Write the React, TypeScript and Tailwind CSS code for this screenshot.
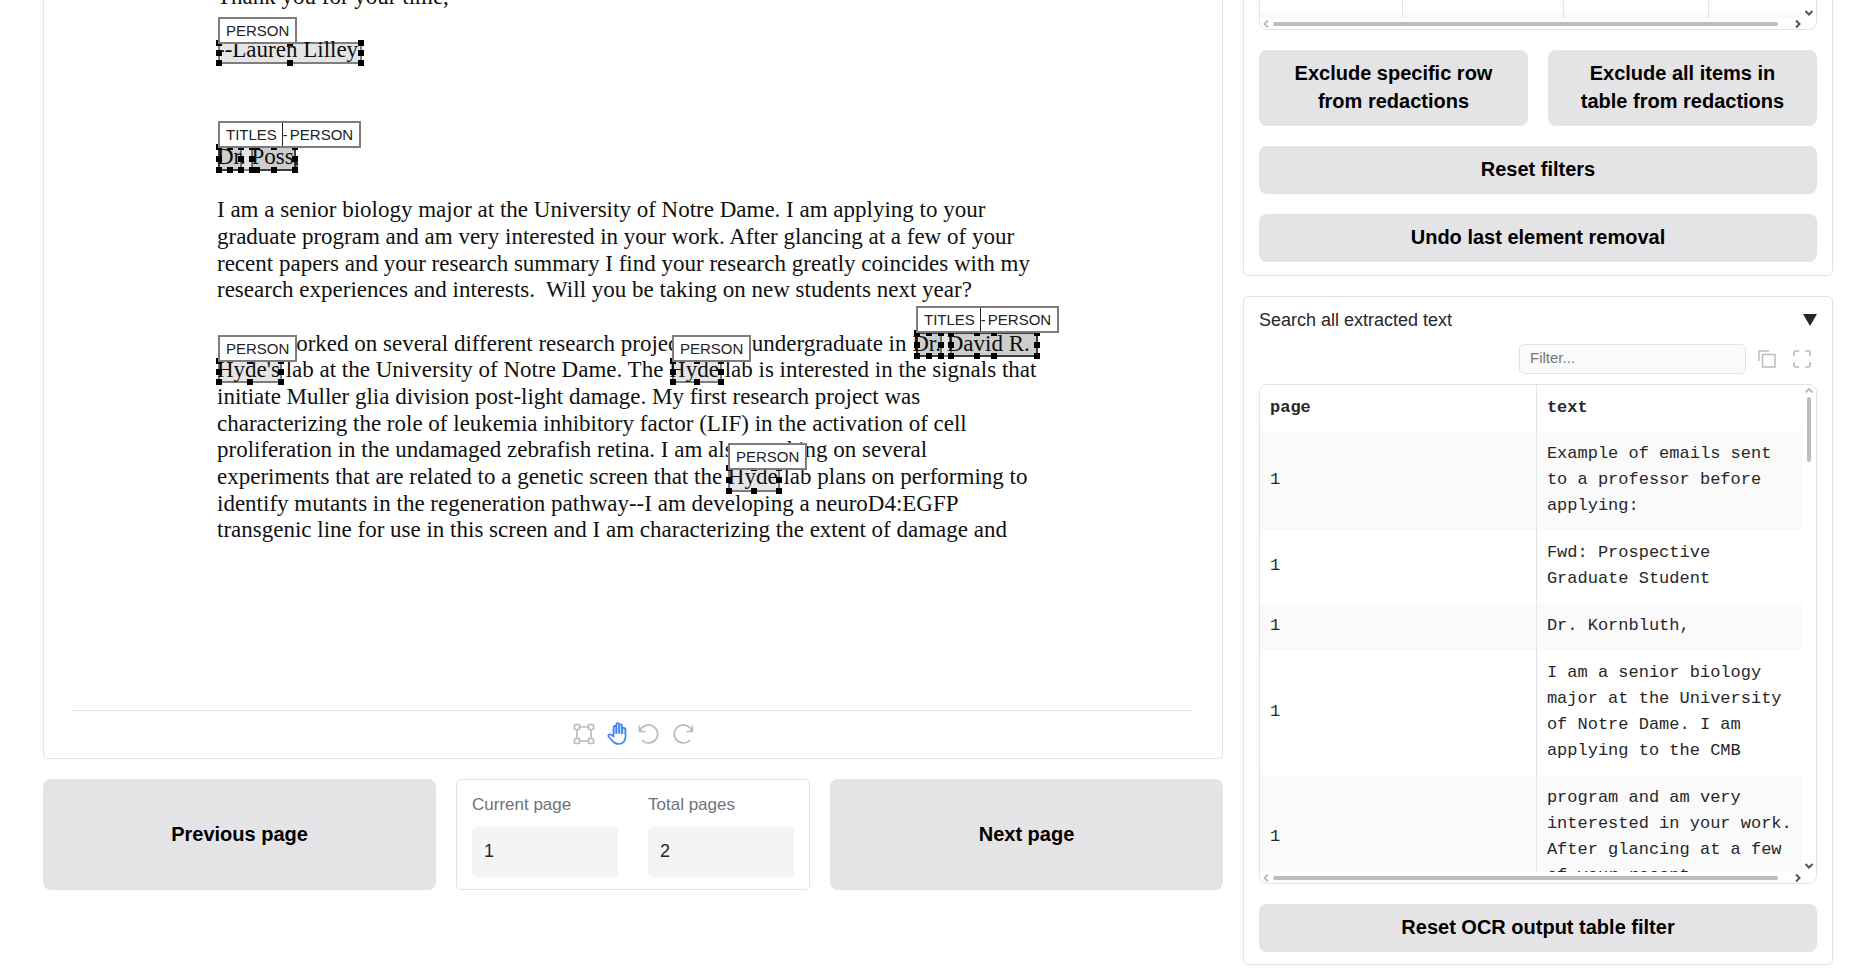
import type { ReactNode } from "react";

type Box = { left: number; top: number; width: number; height: number };

const LINES = [
  "Thank you for your time,",
  "",
  "--Lauren Lilley",
  "",
  "",
  "",
  "Dr. Poss,",
  "",
  "I am a senior biology major at the University of Notre Dame. I am applying to your",
  "graduate program and am very interested in your work. After glancing at a few of your",
  "recent papers and your research summary I find your research greatly coincides with my",
  "research experiences and interests.  Will you be taking on new students next year?",
  "",
  "I have worked on several different research projects as an undergraduate in Dr. David R.",
  "Hyde's lab at the University of Notre Dame. The Hyde lab is interested in the signals that",
  "initiate Muller glia division post-light damage. My first research project was",
  "characterizing the role of leukemia inhibitory factor (LIF) in the activation of cell",
  "proliferation in the undamaged zebrafish retina. I am also working on several",
  "experiments that are related to a genetic screen that the Hyde lab plans on performing to",
  "identify mutants in the regeneration pathway--I am developing a neuroD4:EGFP",
  "transgenic line for use in this screen and I am characterizing the extent of damage and",
];

const BOXES: Box[] = [
  { left: 219, top: 43, width: 142, height: 20 },
  { left: 219, top: 147, width: 22, height: 23 },
  { left: 219, top: 147, width: 76, height: 23 },
  { left: 252, top: 147, width: 43, height: 23 },
  { left: 917, top: 333, width: 24, height: 23 },
  { left: 917, top: 333, width: 120, height: 23 },
  { left: 951, top: 333, width: 86, height: 23 },
  { left: 219, top: 361, width: 62, height: 21 },
  { left: 673, top: 361, width: 48, height: 21 },
  { left: 729, top: 468, width: 50, height: 23 },
];

const LABELS = [
  { left: 218, top: 17, names: ["PERSON"] },
  { left: 218, top: 121, names: ["TITLES", "PERSON"] },
  { left: 916, top: 306, names: ["TITLES", "PERSON"] },
  { left: 218, top: 335, names: ["PERSON"] },
  { left: 672, top: 335, names: ["PERSON"] },
  { left: 728, top: 443, names: ["PERSON"] },
];

const ROWS = [
  ["Example of emails sent", "to a professor before", "applying:"],
  ["Fwd: Prospective", "Graduate Student"],
  ["Dr. Kornbluth,"],
  ["I am a senior biology", "major at the University", "of Notre Dame. I am", "applying to the CMB"],
  ["program and am very", "interested in your work.", "After glancing at a few", "of your recent"],
];

function Redaction({ box }: { box: Box }) {
  const handle = "absolute size-[6px] -translate-1/2 bg-black";
  return (
    <div className="absolute" style={box}>
      <div className="absolute -inset-px border-2 border-black/45 bg-black/10" />
      <i className={`${handle} left-0 top-0`} />
      <i className={`${handle} left-1/2 top-0`} />
      <i className={`${handle} left-full top-0`} />
      <i className={`${handle} left-0 top-1/2`} />
      <i className={`${handle} left-full top-1/2`} />
      <i className={`${handle} left-0 top-full`} />
      <i className={`${handle} left-1/2 top-full`} />
      <i className={`${handle} left-full top-full`} />
    </div>
  );
}

function Label({ left, top, names }: { left: number; top: number; names: string[] }) {
  return (
    <div
      className="absolute flex h-[27px] items-center border-2 border-[#7d7d7d] bg-white font-['Liberation_Sans',sans-serif] text-[15px] leading-[23px] text-[#222]"
      style={{ left, top }}
    >
      {names.map((name, i) => (
        <span
          key={name}
          className={
            i < names.length - 1
              ? "border-r border-[#222] pl-[6px] pr-[5px]"
              : names.length > 1
                ? "pr-[6px]"
                : "px-[6px]"
          }
        >
          {i > 0 && <span className="mr-[3px] inline-block w-[4px] overflow-hidden align-bottom">-</span>}
          {name}
        </span>
      ))}
    </div>
  );
}

function ActionButton({ children }: { children: ReactNode }) {
  return (
    <button className="w-full rounded-lg bg-[#e4e4e7] px-5 pb-[11px] pt-[9px] text-center text-[20px] font-bold leading-[28px] text-black">
      {children}
    </button>
  );
}

function Chevron({ d, tone }: { d: string; tone: string }) {
  return (
    <svg viewBox="0 0 8 8" className={`size-[8px] shrink-0 ${tone}`} fill="none" stroke="currentColor" strokeWidth="2">
      <path d={d} />
    </svg>
  );
}

function HorizontalScroll() {
  return (
    <div className="flex h-[11px] items-center pl-[2px] pr-[14px] pt-[1px]">
      <Chevron d="M6 .5 2.5 4 6 7.5" tone="text-[#bdbdbd]" />
      <div className="ml-[3px] mr-[16px] h-[4px] flex-1 rounded-full bg-[#bdbdbd]" />
      <Chevron d="M2 .5 5.5 4 2 7.5" tone="text-[#555]" />
    </div>
  );
}

function Toolbar() {
  return (
    <div className="mx-[29px] flex h-[47px] items-center justify-center gap-[12px] border-t border-[#e0e0e3] text-[#bbbbc2]">
      <button aria-label="Draw box">
        <svg viewBox="0 0 22 22" className="size-[22px]" fill="none" stroke="currentColor" strokeWidth="1.7">
          <rect x="1.5" y="1.5" width="5" height="5" rx="1" />
          <rect x="15.5" y="1.5" width="5" height="5" rx="1" />
          <rect x="1.5" y="15.5" width="5" height="5" rx="1" />
          <rect x="15.5" y="15.5" width="5" height="5" rx="1" />
          <path d="M6.500 4h9M6.500 18h9M4 6.500v9M18 6.500v9" />
        </svg>
      </button>
      <button aria-label="Pan">
        <svg viewBox="0 0 22 24" className="h-[24px] w-[22px]" stroke="#3b82f6" strokeWidth="1.700" strokeLinecap="round" strokeLinejoin="round">
          <path d="M6.500 4.500q1.600-1 2.700 0l.5-1.700q1.400-1.300 2.900 0l.3 1q1.600-.7 2.600.5v2.300q1.600-.6 2.700.7v4.500H6.500z" fill="#bfdbfe" stroke="none" />
          <path
            d="M6.500 14.500V5.200a1.400 1.400 0 0 1 2.800 0V11M9.300 11V2.600a1.400 1.400 0 0 1 2.800 0V11M12.100 5V3.800a1.400 1.400 0 0 1 2.900 0v7.700M15 7.600a1.500 1.500 0 0 1 3.500 0v6.900c0 4.500-2.600 7.500-6.900 7.500-3.500 0-5-1.500-6.300-3.300L1.600 14.500c-.8-1.500.9-2.900 2.500-1.800l2.400 1.900"
            fill="none"
          />
        </svg>
      </button>
      <button aria-label="Undo" className="-ml-[3px]">
        <svg viewBox="0 0 22 22" className="size-[22px]" fill="none" stroke="currentColor" strokeWidth="1.700">
          <path d="M1.500 2.500v6h6M2 8.500A9 9 0 1 1 4 17" />
        </svg>
      </button>
      <button aria-label="Redo">
        <svg viewBox="0 0 22 22" className="size-[22px]" fill="none" stroke="currentColor" strokeWidth="1.700">
          <path d="M20.500 2.500v6h-6M20 8.500A9 9 0 1 0 18 17" />
        </svg>
      </button>
    </div>
  );
}

function PageField({ id, label, value }: { id: string; label: string; value: string }) {
  return (
    <div className="flex min-w-0 flex-1 flex-col gap-[10px]">
      <label htmlFor={id} className="text-[17px] leading-[24px] text-[#71717a]">
        {label}
      </label>
      <input
        id={id}
        defaultValue={value}
        className="h-[50px] w-full rounded-[5px] bg-[#f4f4f5] px-[12px] pb-[2px] text-[18px] text-[#27272a]"
      />
    </div>
  );
}

export default function App() {
  return (
    <main className="grid grid-cols-[1180fr_590fr] items-start gap-5 overflow-hidden bg-white pl-[43px] pr-[21px] font-['Liberation_Sans',sans-serif] text-[#27272a]">
      <div className="flex min-w-0 flex-col gap-5">
        <section className="rounded-b-[5px] border border-t-0 border-[#e4e4e7] pb-[1px]">
          <div className="relative -ml-[44px] h-[710px] overflow-hidden">
            <div className="-mt-[16px] ml-[217px] grid h-[560px] grid-rows-[repeat(21,1fr)] whitespace-pre font-['Liberation_Serif',serif] text-[23px] leading-[26px] text-[#111]">
              {LINES.map((line, i) => (
                <p key={i}>{line}</p>
              ))}
            </div>
            {BOXES.map((box, i) => (
              <Redaction key={i} box={box} />
            ))}
            {LABELS.map((label, i) => (
              <Label key={i} {...label} />
            ))}
          </div>
          <Toolbar />
        </section>

        <div className="grid grid-cols-[393fr_354fr_393fr] gap-5">
          <ActionButton>Previous page</ActionButton>
          <div className="flex gap-[30px] rounded-[5px] border border-[#e4e4e7] px-[15px] pb-[12px] pt-[13px]">
            <PageField id="current-page" label="Current page" value="1" />
            <PageField id="total-pages" label="Total pages" value="2" />
          </div>
          <ActionButton>Next page</ActionButton>
        </div>
      </div>

      <div className="flex min-w-0 flex-col gap-5">
        <section className="flex flex-col gap-5 rounded-b-[5px] border border-t-0 border-[#e4e4e7] px-[15px] pb-[13px]">
          <div className="rounded-b-lg border border-t-0 border-[#e4e4e7]">
            <div className="flex h-[18px]">
              <div className="grid flex-1 grid-cols-[144fr_163fr_146fr_94fr] divide-x divide-[#e4e4e7]">
                {[0, 1, 2, 3].map((i) => (
                  <div key={i}>
                    <div className="h-[13px]" />
                    <div className="h-[5px] bg-[#fafafa]" />
                  </div>
                ))}
              </div>
              <div className="flex w-[14px] flex-col items-center justify-end pb-[1px]">
                <Chevron d="M.5 2 4 5.500 7.500 2" tone="text-[#555]" />
              </div>
            </div>
            <HorizontalScroll />
          </div>
          <div className="grid grid-cols-2 gap-5">
            <ActionButton>
              Exclude specific row
              <br />
              from redactions
            </ActionButton>
            <ActionButton>
              Exclude all items in
              <br />
              table from redactions
            </ActionButton>
          </div>
          <ActionButton>Reset filters</ActionButton>
          <ActionButton>Undo last element removal</ActionButton>
        </section>

        <section className="rounded-[5px] border border-[#e4e4e7] px-[15px] pb-[12px] pt-[10px]">
          <button className="flex w-full items-center justify-between text-left text-[18px] leading-[26px]">
            <span>Search all extracted text</span>
            <svg viewBox="0 0 14 12" className="h-[12px] w-[14px]" fill="currentColor">
              <path d="M0 0h14L7 12z" />
            </svg>
          </button>
          <div className="mt-[11px] flex items-center justify-end gap-[12px] pr-[6px] text-[#bbbbc2]">
            <input
              aria-label="Filter"
              placeholder="Filter..."
              className="h-[30px] w-[227px] rounded-[5px] border border-[#e4e4e7] bg-[#fafafa] px-[10px] pb-[3px] text-[15px] text-[#27272a] placeholder:text-[#757575]"
            />
            <button aria-label="Copy">
              <svg viewBox="0 0 18 18" className="size-[18px]" fill="none" stroke="currentColor" strokeWidth="1.500">
                <path d="M1 11V1h10" />
                <path d="M4.500 4.500h12.500v12.500H4.500z" />
              </svg>
            </button>
            <button aria-label="Full screen" className="ml-[5px]">
              <svg viewBox="0 0 18 18" className="size-[18px]" fill="none" stroke="currentColor" strokeWidth="1.700" strokeLinecap="round">
                <path d="M1 5.500V2.500Q1 1 2.500 1h3M12.500 1h3Q17 1 17 2.500v3M17 12.500v3Q17 17 15.500 17h-3M5.500 17h-3Q1 17 1 15.500v-3" />
              </svg>
            </button>
          </div>
          <div className="mt-[10px] overflow-hidden rounded-lg border border-[#e4e4e7]">
            <div className="flex h-[487px]">
              <div className="min-w-0 flex-1 overflow-hidden">
                <table className="w-full table-fixed border-collapse font-['Liberation_Mono',monospace] text-[17px] leading-[26px]">
                  <colgroup>
                    <col className="w-[51%]" />
                    <col className="w-[49%]" />
                  </colgroup>
                  <thead>
                    <tr className="text-left">
                      <th className="px-[10px] py-[10px] font-bold">page</th>
                      <th className="border-l border-[#e4e4e7] px-[10px] py-[10px] font-bold">text</th>
                    </tr>
                  </thead>
                  <tbody>
                    {ROWS.map((lines) => (
                      <tr key={lines[0]} className="odd:bg-[#fafafa]">
                        <td className="px-[10px] pb-[11px] pt-[10px]">1</td>
                        <td className="whitespace-nowrap border-l border-[#e4e4e7] pb-[11px] pl-[10px] pt-[10px]">
                          {lines.map((line) => (
                            <div key={line}>{line}</div>
                          ))}
                        </td>
                      </tr>
                    ))}
                  </tbody>
                </table>
              </div>
              <div className="flex w-[14px] flex-col items-center pb-[2px] pt-[2px]">
                <Chevron d="M.5 5.500 4 2l3.500 3.500" tone="text-[#bdbdbd]" />
                <div className="mt-[2px] h-[65px] w-[4px] rounded-full bg-[#bdbdbd]" />
                <div className="flex-1" />
                <Chevron d="M.5 2 4 5.500 7.500 2" tone="text-[#555]" />
              </div>
            </div>
            <HorizontalScroll />
          </div>
          <div className="mt-5">
            <ActionButton>Reset OCR output table filter</ActionButton>
          </div>
        </section>
      </div>
    </main>
  );
}
